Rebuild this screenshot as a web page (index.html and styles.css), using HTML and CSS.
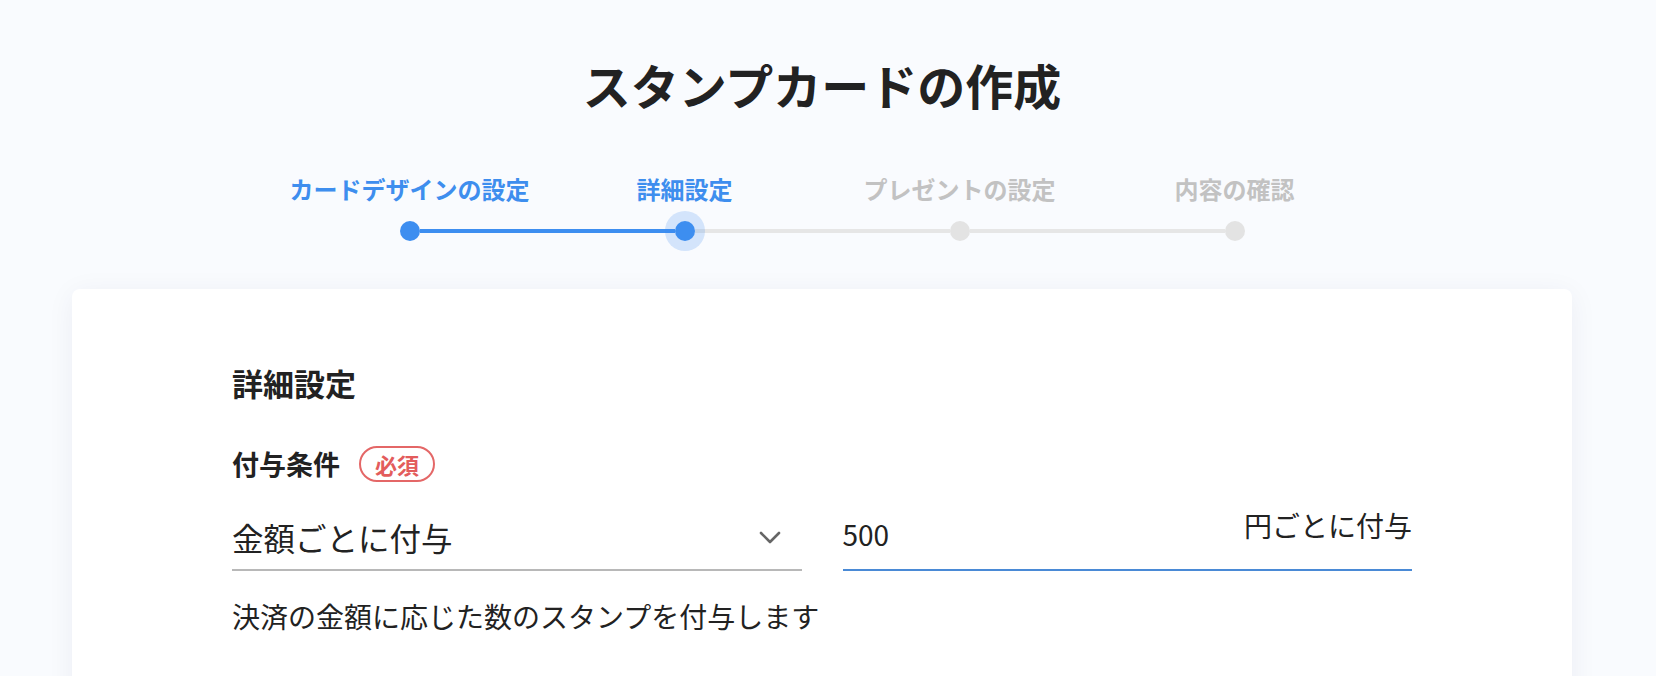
FILE: index.html
```html
<!DOCTYPE html>
<html lang="ja">
<head>
<meta charset="utf-8">
<title>スタンプカードの作成</title>
<link rel="stylesheet" href="styles.css">
</head>
<body>
<div class="page">
  <h1 class="title">スタンプカードの作成</h1>

  <div class="stepper">
    <div class="step-labels">
      <div class="step-label done">カードデザインの設定</div>
      <div class="step-label done">詳細設定</div>
      <div class="step-label">プレゼントの設定</div>
      <div class="step-label">内容の確認</div>
    </div>
    <div class="track">
      <span class="dot dot-done"></span>
      <span class="seg seg-done"></span>
      <span class="dot dot-current"></span>
      <span class="seg"></span>
      <span class="dot"></span>
      <span class="seg"></span>
      <span class="dot"></span>
    </div>
  </div>

  <section class="card">
    <h2 class="section-title">詳細設定</h2>
    <div class="field-label">
      <span class="label-text">付与条件</span>
      <span class="badge">必須</span>
    </div>
    <div class="form-row">
      <div class="select">
        <span class="select-text">金額ごとに付与</span>
        <svg class="chevron" width="22" height="13" viewBox="0 0 22 13" aria-hidden="true">
          <path d="M2 2 L11 11 L20 2" fill="none" stroke="#666" stroke-width="2.6" stroke-linecap="round" stroke-linejoin="round"/>
        </svg>
      </div>
      <div class="amount">
        <span class="amount-value">500</span>
        <span class="amount-suffix">円ごとに付与</span>
      </div>
    </div>
    <p class="help">決済の金額に応じた数のスタンプを付与します</p>
  </section>
</div>
</body>
</html>
```

FILE: styles.css
```css
html {
  overflow: hidden;
}
body {
  margin: 0;
  background: #f9fbfe;
  color: #222;
  font-family: "Noto Sans CJK JP", "Noto Sans", sans-serif;
}
.page {
  padding: 48px 84px 0 72px;
}
.title {
  margin: 0;
  text-align: center;
  font-size: 48px;
  line-height: 72px;
  font-weight: 700;
  color: #222;
}
.stepper {
  margin-top: 51px;
  display: flex;
  flex-direction: column;
  align-items: center;
}
.step-labels {
  display: flex;
}
.step-label {
  width: 275px;
  text-align: center;
  font-size: 24px;
  line-height: 36px;
  font-weight: 700;
  color: #c2c2c2;
  white-space: nowrap;
}
.step-label.done {
  color: #3e8eee;
}
.track {
  margin-top: 14px;
  width: 845px;
  display: flex;
  align-items: center;
  height: 20px;
}
.dot {
  width: 20px;
  height: 20px;
  border-radius: 50%;
  background: #e3e3e3;
  flex: none;
  position: relative;
  z-index: 1;
}
.dot-done,
.dot-current {
  background: #3d8ef0;
}
.dot-current {
  box-shadow: 0 0 0 10px rgba(61, 142, 240, 0.2);
}
.seg {
  flex: 1;
  height: 4px;
  background: #e6e6e6;
}
.seg-done {
  background: #3d8ef0;
}
.card {
  margin-top: 48px;
  background: #fff;
  border-radius: 8px;
  box-shadow: 0 4px 28px rgba(30, 40, 80, 0.06);
  padding: 71px 160px 120px;
}
.section-title {
  margin: 0;
  font-size: 31px;
  line-height: 46px;
  font-weight: 700;
  color: #222;
}
.field-label {
  margin-top: 40px;
  display: flex;
  align-items: center;
  gap: 19px;
}
.label-text {
  font-size: 27px;
  line-height: 36px;
  font-weight: 700;
}
.badge {
  height: 36px;
  box-sizing: border-box;
  padding: 0 14px;
  border: 2px solid #e46767;
  border-radius: 18px;
  color: #e35c5c;
  font-size: 22px;
  font-weight: 700;
  line-height: 32px;
  display: flex;
  align-items: center;
}
.form-row {
  margin-top: 31px;
  display: flex;
  gap: 41px;
}
.select {
  flex: 1;
  display: flex;
  align-items: center;
  justify-content: space-between;
  padding-bottom: 8px;
  border-bottom: 2px solid #b8b8b8;
}
.select-text {
  font-size: 31.5px;
  line-height: 48px;
  color: #222;
}
.chevron {
  margin-right: 21px;
}
.amount {
  flex: 1;
  display: flex;
  justify-content: space-between;
  align-items: flex-start;
  padding-bottom: 14px;
  border-bottom: 2px solid #4a8ad6;
}
.amount-value {
  font-size: 28px;
  line-height: 42px;
  color: #222;
}
.amount-suffix {
  font-size: 28px;
  line-height: 42px;
  color: #222;
  margin-top: -9px;
}
.help {
  margin: 24px 0 0;
  font-size: 28px;
  line-height: 42px;
  color: #222;
}
```
